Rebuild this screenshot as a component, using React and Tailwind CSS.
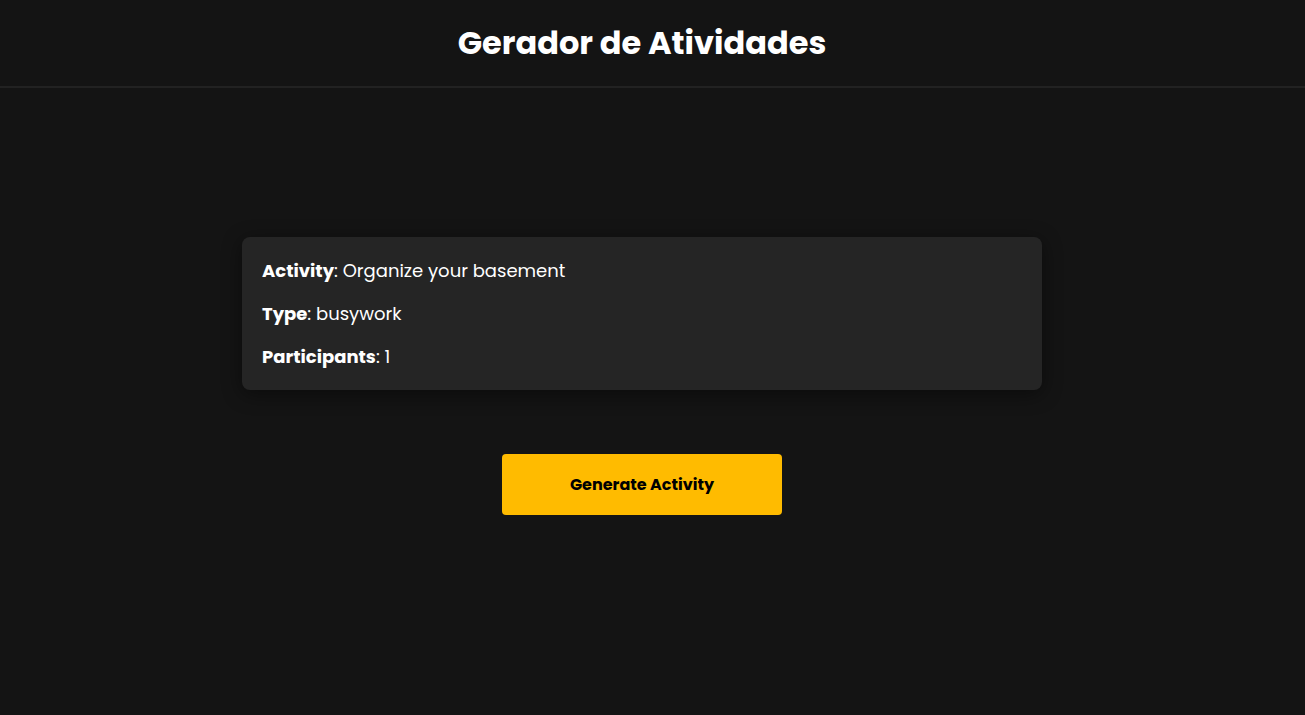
export default function App() {
  return (
    <div
      className="min-h-screen bg-[#141414] text-white"
      style={{ fontFamily: 'Poppins, "Open Sans", sans-serif' }}
    >
      <header className="h-[88px] flex items-center justify-center pr-[21px] border-b-2 border-[#222222]">
        <h1 className="text-[32px] font-bold">Gerador de Atividades</h1>
      </header>

      <main className="flex flex-col items-center pr-[21px] pt-[149px]">
        <div className="w-[800px] bg-[#252525] rounded-lg p-5 flex flex-col gap-4 shadow-[0_4px_20px_rgba(0,0,0,0.45)]">
          <p className="text-[18px] leading-[27px]">
            <span className="font-bold">Activity</span>: Organize your basement
          </p>
          <p className="text-[18px] leading-[27px]">
            <span className="font-bold">Type</span>: busywork
          </p>
          <p className="text-[18px] leading-[27px]">
            <span className="font-bold">Participants</span>: 1
          </p>
        </div>

        <button className="mt-16 w-[280px] h-[61px] bg-[#ffbb00] rounded text-black text-[16px] font-bold">
          Generate Activity
        </button>
      </main>
    </div>
  );
}
